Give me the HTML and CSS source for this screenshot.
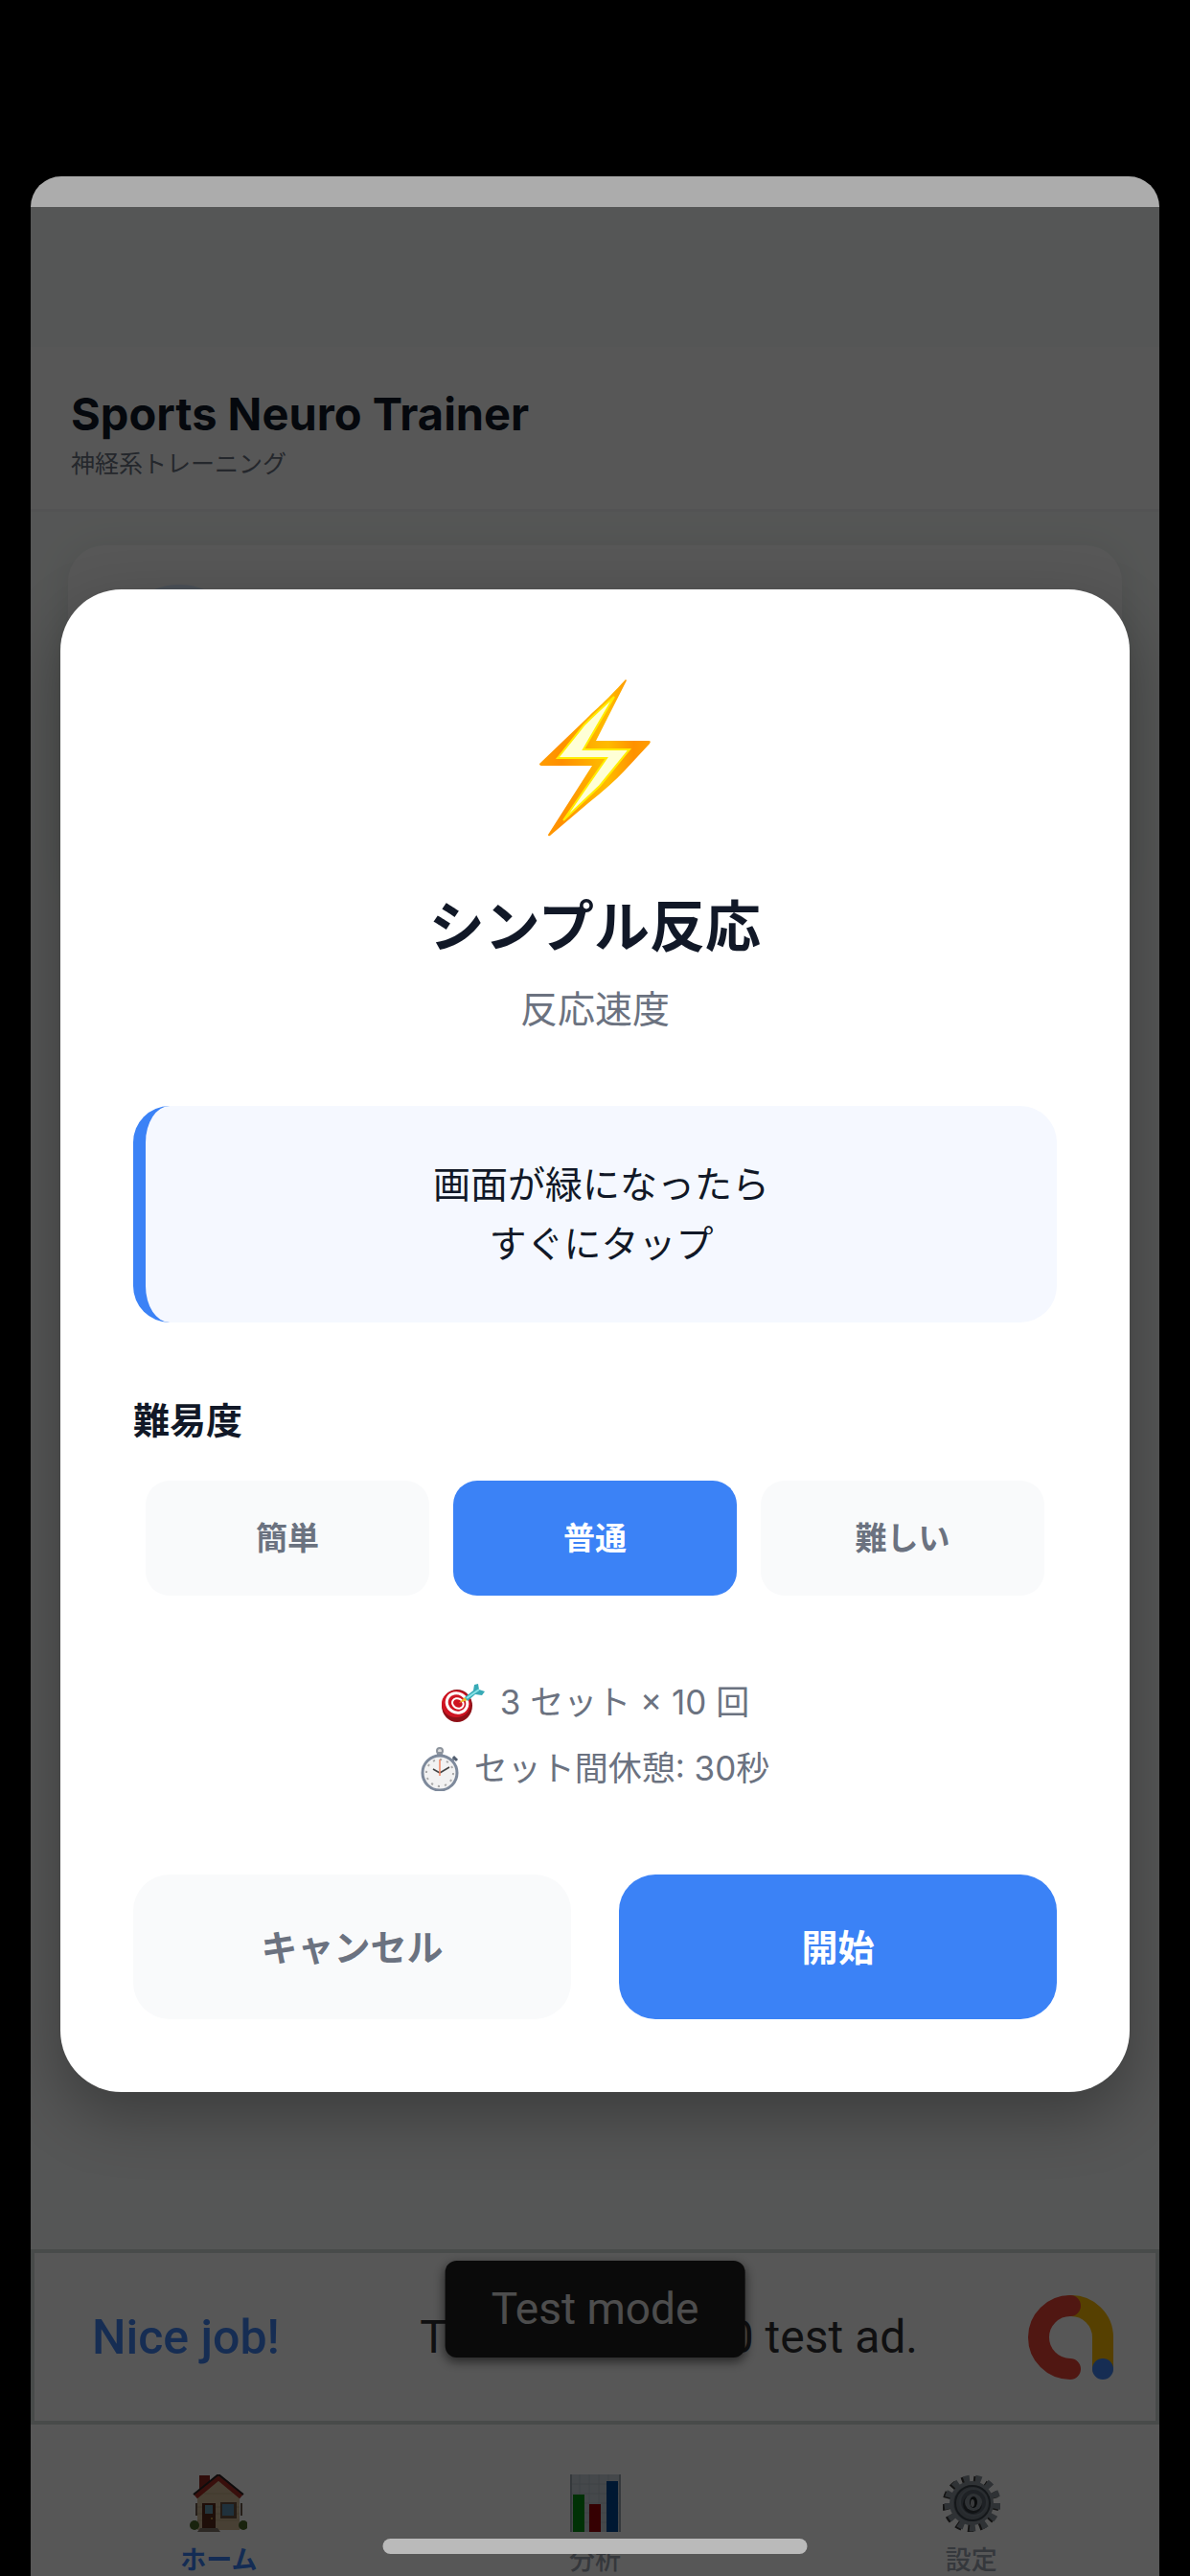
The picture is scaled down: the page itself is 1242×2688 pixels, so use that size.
FILE: index.html
```
<!doctype html>
<html lang="ja">
	<head>
		<meta charset="utf-8">
		<meta name="viewport" content="width=device-width, initial-scale=1">
		<title>Sports Neuro Trainer</title>
		<link rel="stylesheet" href="styles.css">
	</head>
	<body>
		<div class="sheet">
			<div class="screen">
				<header class="header">
					<h1>Sports Neuro Trainer</h1>
					<p>神経系トレーニング</p>
				</header>
				<main class="content">
					<div class="card">
						<div class="card-badge"></div>
					</div>
				</main>
				<aside class="ad">
					<a class="ad-link" href="#">Nice job!</a>
					<span class="ad-text">This is a 320x50 test ad.</span>
					<svg class="ad-logo" viewBox="0 0 90 90" fill="none" stroke-width="22" stroke-linecap="round">
						<path d="M44 12A33 33 0 0 1 78 45V77" stroke="#fbbc04"/>
						<path d="M44 12A33 33 0 0 0 44 78" stroke="#ea4335"/>
						<circle cx="78" cy="78" r="11" fill="#4285f4"/>
					</svg>
					<span class="ad-mode">Test mode</span>
				</aside>
				<nav class="tabs">
					<a class="tab active" href="#">
						<svg viewBox="0 0 60 60">
							<rect x="10" y="1" width="11" height="24" fill="#8d2820"/>
							<path d="M8 24L30 4l22 20v34H8z" fill="#d2bd99"/>
							<path d="M8 34h44M8 41h44M8 48h44M15 20h30" stroke="#bda984"/>
							<path d="M6 23L30 3l24 20" fill="none" stroke="#a62c25" stroke-width="6"/>
							<path d="M4 21L30 0l26 21" fill="none" stroke="#2b2324" stroke-width="2"/>
							<path d="M7 30v13M54 30v13" stroke="#6e594b" stroke-width="2"/>
							<circle cx="5" cy="53" r="5" fill="#49662b"/>
							<circle cx="56" cy="53" r="5" fill="#49662b"/>
							<rect x="13" y="30" width="14" height="26" fill="#592b1b"/>
							<rect x="16" y="32" width="8" height="9" fill="#6898ad"/>
							<circle cx="23" cy="46" r="1" fill="#d7ac4a"/>
							<rect x="32" y="29" width="17" height="17" fill="#6c5242"/>
							<rect x="34" y="31" width="12" height="12" fill="#5f91b1"/>
							<path d="M11 56h18l3 4H8z" fill="#827569"/>
						</svg>
						<span>ホーム</span>
					</a>
					<a class="tab" href="#">
						<svg viewBox="0 0 60 60">
							<path d="M4 0h52v60H4z" fill="#c9d2db"/>
							<path d="M4 10h52M4 20h52M4 30h52M4 40h52M4 50h52M14 0v60M24 0v60M34 0v60M44 0v60" stroke="#b6c1ca"/>
							<path d="M7 21h12v39H7z" fill="#008f12"/>
							<path d="M24 31h12v29H24z" fill="#9d0006"/>
							<path d="M42 7h12v53H42z" fill="#004692"/>
							<path d="M5 0v60M56 0v60" stroke="#9da7b0" stroke-width="2"/>
						</svg>
						<span>分析</span>
					</a>
					<a class="tab" href="#">
						<svg viewBox="0 0 60 60" fill="none">
							<circle cx="29" cy="31" r="25" stroke="#3b3a39" stroke-width="9" pathLength="26" stroke-dasharray="1 1"/>
							<circle cx="31" cy="30" r="25" stroke="#8b949c" stroke-width="9" pathLength="26" stroke-dasharray="1 1"/>
							<circle cx="30" cy="30" r="21" fill="#727b84" stroke="#8b949c" stroke-width="4"/>
							<circle cx="31" cy="30" r="18" stroke="#3d444c" stroke-width="2"/>
							<circle cx="32" cy="29" r="14" fill="#59626c" stroke="#7b858f" stroke-width="2"/>
							<circle cx="31" cy="31" r="10" fill="#30363d"/>
							<circle cx="32" cy="29" r="9" fill="#8b949c"/>
							<ellipse cx="32" cy="29" rx="4" ry="6" fill="#1c2125"/>
							<ellipse cx="31" cy="30" rx="2" ry="4" fill="#a9aeb2"/>
						</svg>
						<span>設定</span>
					</a>
				</nav>

				<div class="overlay">
					<section class="modal" role="dialog" aria-modal="true" aria-labelledby="modal-title">
						<svg class="bolt" viewBox="0 0 116 164">
							<defs>
								<linearGradient id="gold" x1="0" y1="0" x2="1" y2="0">
									<stop offset="0" stop-color="#ff9d00"/>
									<stop offset=".2" stop-color="#ff8f00"/>
									<stop offset=".52" stop-color="#ffb400"/>
									<stop offset=".62" stop-color="#ffba00"/>
									<stop offset=".85" stop-color="#ff9100"/>
									<stop offset="1" stop-color="#ff9d00"/>
								</linearGradient>
							</defs>
							<path d="M90 0C66 26 62 28 49 41L0 88q0 2 3 2h52L9 162q0 2 2 1L51 129q24-19 38-34l26-28q2-3-1-3H59L91 1z" fill="url(#gold)"/>
							<path d="M78 18Q60 34 47 47L19 82h51l-45 65 38-36 31-38H46z" fill="#ffffd6" stroke="#ffed00" stroke-width="2"/>
						</svg>
						<h2 id="modal-title">シンプル反応</h2>
						<p class="category">反応速度</p>
						<p class="instruction">画面が緑になったら<br>すぐにタップ</p>
						<h3 id="difficulty">難易度</h3>
						<div class="levels" role="group" aria-labelledby="difficulty">
							<button type="button" aria-pressed="false">簡単</button>
							<button type="button" class="selected" aria-pressed="true">普通</button>
							<button type="button" aria-pressed="false">難しい</button>
						</div>
						<div class="details">
							<p>
								<svg class="target" viewBox="0 0 46 40">
									<ellipse cx="17" cy="23" rx="16" ry="17" fill="#8f1017"/>
									<ellipse cx="16" cy="21" rx="15" ry="14" fill="#cf1422"/>
									<g fill="none" transform="rotate(30 17 20)">
										<ellipse cx="17" cy="20" rx="11" ry="10" stroke="#fff" stroke-width="3"/>
										<ellipse cx="18" cy="20" rx="6" ry="5" stroke="#fff" stroke-width="2"/>
									</g>
									<circle cx="19" cy="20" r="2" fill="#cf1422"/>
									<path d="M19 20l6-6 3 3z" fill="#efb528"/>
									<path d="M25 14l9-7 1-6 4-1 1 6 6 2-3 4-7-1-8 7z" fill="#38aab6"/>
									<path d="M27 15L40 6" stroke="#86e3e6" stroke-width="2"/>
								</svg>
								3 セット × 10 回
							</p>
							<p>
								<svg class="stopwatch" viewBox="0 0 40 46">
									<circle cx="20" cy="4" r="3" fill="#ddd" stroke="#8d949d" stroke-width="2"/>
									<path d="M17 5h6v5h-6z" fill="#8d949d"/>
									<path d="M31 16l4-4" stroke="#7c8796" stroke-width="3"/>
									<path d="M34 10l4 4" stroke="#525e6f" stroke-width="3"/>
									<circle cx="20" cy="27" r="18" fill="#f2f2f2" stroke="#7d899b" stroke-width="3"/>
									<circle cx="20" cy="27" r="14" fill="none" stroke="#aaa" stroke-width="2" pathLength="24" stroke-dasharray=".6 1.4"/>
									<path d="M20 27l-7-4M20 27l10-6" stroke="#444" stroke-width="1.5"/>
									<path d="M20 30V13" stroke="#f28562" stroke-width="1.5"/>
								</svg>
								セット間休憩: 30秒
							</p>
						</div>
						<div class="actions">
							<button type="button">キャンセル</button>
							<button type="button" class="start">開始</button>
						</div>
					</section>
				</div>
			</div>
		</div>
		<div class="home-indicator"></div>
	</body>
</html>
```
FILE: styles.css
```
* {
	box-sizing: border-box;
}
body {
	margin: 0;
	background-color: #000;
	color: #111827;
	font-family: Inter, "Noto Sans CJK JP", sans-serif;
}
h1, h2, h3, p {
	margin: 0;
}
button {
	border: 0;
	padding: 0 0 4px;
	font-family: inherit;
	font-weight: 600;
	background-color: #f9fafb;
	color: #6b7280;
}
a {
	color: inherit;
	text-decoration: none;
}
svg {
	flex: none;
}
.sheet {
	display: flex;
	flex-direction: column;
	min-height: calc(100vh - 184px);
	margin: 184px 32px 0;
	padding-top: 32px;
	border-radius: 32px 32px 0 0;
	background-color: #acacac;
}
.screen {
	position: relative;
	flex: 1;
	display: flex;
	flex-direction: column;
	padding-top: 146px;
	background-color: #f9fdfb;
}
.header {
	padding: 42px 42px 31px;
	background-color: #fff;
	border-bottom: 3px solid #f3f4f6;
}
.header h1 {
	font-size: 47px;
	line-height: 56px;
	font-weight: 700;
}
.header p {
	margin-top: 8px;
	font-size: 25px;
	line-height: 32px;
	color: #6b7280;
}
.content {
	flex: 1;
	padding: 35px 39px;
}
.card {
	min-height: 360px;
	padding: 41px 46px;
	border-radius: 38px;
	background-color: #fff;
	box-shadow: 0 4px 40px rgba(0, 0, 0, .1);
}
.card-badge {
	width: 140px;
	height: 140px;
	border-radius: 50%;
	background-color: #dbeafe;
}

/* ad banner */
.ad {
	position: relative;
	display: flex;
	align-items: center;
	height: 183px;
	padding: 0 43px 0 60px;
	border: 4px solid #d4dcda;
	background-color: #fff;
	font-family: Roboto, sans-serif;
	font-size: 48px;
}
.ad-link {
	font-size: 50px;
	font-weight: 500;
	color: #4285f4;
}
.ad-text {
	margin: 0 115px 0 auto;
	color: #303134;
}
.ad-logo {
	width: 90px;
	height: 90px;
}
.ad-mode {
	position: absolute;
	top: 8px;
	left: 50%;
	transform: translateX(-50%);
	padding: 0 48px;
	border-radius: 12px;
	background-color: #1f1f1f;
	color: #e0e0e0;
	font-size: 46px;
	line-height: 101px;
	white-space: nowrap;
	box-shadow: 0 4px 12px rgba(0, 0, 0, .6);
}

.tabs {
	display: flex;
	padding-top: 52px;
	background-color: #fff;
}
.tab {
	flex: 1;
	display: flex;
	flex-direction: column;
	align-items: center;
	gap: 14px;
	font-size: 27px;
	line-height: 32px;
	font-weight: 500;
	color: #9ca3af;
}
.tab svg {
	width: 60px;
	height: 60px;
}
.tab.active {
	font-weight: 600;
	color: #3b82f6;
}

/* exercise modal */
.overlay {
	position: absolute;
	inset: 0;
	padding: 399px 31px 0;
	background-color: rgba(0, 0, 0, .66);
}
.modal {
	display: flex;
	flex-direction: column;
	padding: 76px;
	border-radius: 64px;
	background-color: #fff;
	text-align: center;
	box-shadow: 0 25px 64px rgba(0, 0, 0, .3);
}
.bolt {
	width: 116px;
	height: 164px;
	margin: 18px auto 56px;
}
.modal h2 {
	font-size: 58px;
	line-height: 76px;
	font-weight: 700;
}
.category {
	margin-top: 24px;
	font-size: 39px;
	line-height: 48px;
	color: #6b7280;
}
.instruction {
	margin-top: 77px;
	padding: 51px;
	border-left: 13px solid #3b82f6;
	border-radius: 38px;
	background-color: #f5f8ff;
	font-size: 39px;
	line-height: 62px;
}
.modal h3 {
	margin-top: 78px;
	text-align: left;
	font-size: 38px;
	line-height: 48px;
	font-weight: 600;
}
.levels {
	display: flex;
	gap: 25px;
	margin-top: 39px;
	padding: 0 13px;
}
.levels button {
	flex: 1;
	height: 120px;
	border-radius: 25px;
	font-size: 33px;
}
.details {
	margin-top: 77px;
	font-size: 35px;
	line-height: 69px;
	color: #6b7280;
}
.details p {
	display: flex;
	align-items: center;
	justify-content: center;
	gap: 16px;
}
.target {
	width: 46px;
	height: 40px;
}
.stopwatch {
	width: 40px;
	height: 46px;
}
.actions {
	display: flex;
	gap: 50px;
	margin-top: 76px;
}
.actions button {
	flex: 1;
	height: 151px;
	border-radius: 38px;
	font-size: 38px;
}
.levels .selected, .actions .start {
	background-color: #3b82f6;
	color: #fff;
}
.home-indicator {
	position: fixed;
	bottom: 23px;
	left: 50%;
	transform: translateX(-50%);
	width: 443px;
	height: 16px;
	border-radius: 8px;
	background-color: #bababa;
}
```
